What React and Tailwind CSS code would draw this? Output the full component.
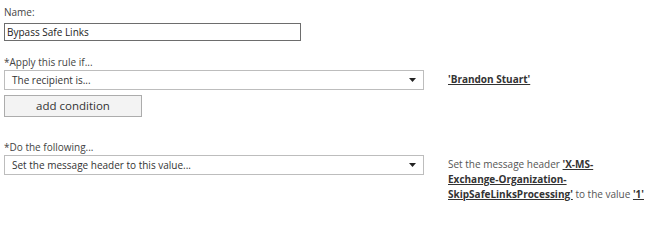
import React from "react";

function Arrow() {
  return (
    <svg width="7" height="4" viewBox="0 0 7 4" className="shrink-0">
      <path d="M0 0 H7 L3.5 4 Z" fill="#222" />
    </svg>
  );
}

function Select({ text }) {
  return (
    <div className="flex h-[20px] w-[420px] shrink-0 items-center justify-between border border-[#bdbdbd] bg-white pl-[7px] pr-[7px] text-[#333]">
      <span className="leading-none">{text}</span>
      <Arrow />
    </div>
  );
}

export default function App() {
  return (
    <div
      className="h-[201px] w-[653px] overflow-hidden bg-white pl-[4px] pt-[4px] text-[10px] text-[#444]"
      style={{ fontFamily: '"Open Sans", "Noto Sans", sans-serif' }}
    >
      <div className="h-[16px] leading-[16px]">Name:</div>
      <div className="mt-[3px] flex h-[18px] w-[297px] items-center border border-[#6d6d6d] pl-[2px] text-[#222]">
        Bypass Safe Links
      </div>
      <div className="mt-[13px] h-[16px] leading-[16px]">*Apply this rule if...</div>
      <div className="flex items-start">
        <Select text="The recipient is..." />
        <div className="ml-[24px] pt-[2px] leading-[15px]">
          <a className="font-bold text-[#333] underline">'Brandon Stuart'</a>
        </div>
      </div>
      <div className="mt-[5px] flex h-[22px] w-[138px] items-center justify-center border border-[#acacac] bg-[#f3f3f3] text-[11.5px] text-[#333]">
        add condition
      </div>
      <div className="mt-[22px] h-[16px] leading-[16px]">*Do the following...</div>
      <div className="flex items-start">
        <Select text="Set the message header to this value..." />
        <div className="ml-[24px] w-[204px] pt-[2px] leading-[15px] text-[#555]">
          Set the message header{" "}
          <a className="font-bold text-[#333] underline">
            'X-MS-
            <br />
            Exchange-Organization-
            <br />
            SkipSafeLinksProcessing'
          </a>{" "}
          to the value <a className="font-bold text-[#333] underline">'1'</a>
        </div>
      </div>
    </div>
  );
}
